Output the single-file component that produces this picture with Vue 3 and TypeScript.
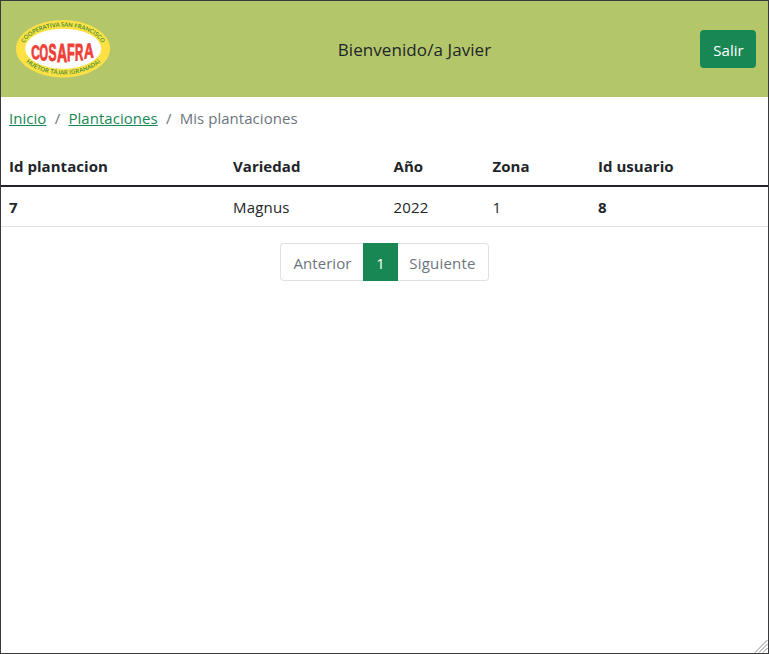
<script setup lang="ts">
interface Plantacion {
  id: number
  variedad: string
  anio: number
  zona: number
  usuario: number
}

interface Letra {
  texto: string
  x: number
  y: number
  ancho: number
  alto: number
  sesgo: number
}

const columnas: string[] = ['Id plantacion', 'Variedad', 'Año', 'Zona', 'Id usuario']
const plantaciones: Plantacion[] = [
  { id: 7, variedad: 'Magnus', anio: 2022, zona: 1, usuario: 8 },
]

// Letras del logotipo: posición de la base, escala horizontal y vertical, e inclinación
const letras: Letra[] = [
  { texto: 'C', x: 15.2, y: 39.2, ancho: 1.2, alto: 1.95, sesgo: 4 },
  { texto: 'O', x: 23.6, y: 40.7, ancho: 1.1, alto: 2.3, sesgo: 2 },
  { texto: 'S', x: 32.6, y: 41.6, ancho: 1.2, alto: 2.4, sesgo: 0 },
  { texto: 'A', x: 41.1, y: 42.4, ancho: 1.4, alto: 2.55, sesgo: 0 },
  { texto: 'F', x: 51, y: 41.6, ancho: 1.25, alto: 2.45, sesgo: 0 },
  { texto: 'R', x: 59, y: 40.9, ancho: 1.15, alto: 2.35, sesgo: -3 },
  { texto: 'A', x: 67.9, y: 39.3, ancho: 1.35, alto: 2.1, sesgo: -8 },
]
</script>

<template>
  <div class="marco">
    <header class="cabecera">
      <svg class="logo" width="94" height="58" viewBox="0 0.5 94 58">
        <defs>
          <path id="arco-superior" d="M7 29.5 A40 22.4 0 0 1 87 29.5" />
          <path id="arco-inferior" d="M3.8 29 A43.4 26 0 0 0 90.6 29" />
        </defs>
        <ellipse cx="47" cy="29.2" rx="47" ry="28.7" fill="#ffe145" />
        <ellipse cx="47.2" cy="29.2" rx="38" ry="20" fill="#fff" />
        <text class="lema">
          <textPath href="#arco-superior" startOffset="50%" text-anchor="middle" textLength="88">COOPERATIVA SAN FRANCISCO</textPath>
        </text>
        <text class="lema">
          <textPath href="#arco-inferior" startOffset="50%" text-anchor="middle" textLength="80">HUÉTOR TÁJAR (GRANADA)</textPath>
        </text>
        <text
          v-for="(l, i) in letras"
          :key="i"
          class="letra"
          :transform="`translate(${l.x} ${l.y}) skewY(${l.sesgo}) scale(${l.ancho} ${l.alto})`"
        >{{ l.texto }}</text>
      </svg>
      <span class="saludo">Bienvenido/a Javier</span>
      <button class="salir" type="button">Salir</button>
    </header>

    <nav class="migas">
      <a href="#">Inicio</a>
      <span class="barra">/</span>
      <a href="#">Plantaciones</a>
      <span class="barra">/</span>
      <span>Mis plantaciones</span>
    </nav>

    <table class="tabla">
      <colgroup>
        <col class="c1" /><col class="c2" /><col class="c3" /><col class="c4" /><col />
      </colgroup>
      <thead>
        <tr>
          <th v-for="c in columnas" :key="c">{{ c }}</th>
        </tr>
      </thead>
      <tbody>
        <tr v-for="p in plantaciones" :key="p.id">
          <th>{{ p.id }}</th>
          <td>{{ p.variedad }}</td>
          <td>{{ p.anio }}</td>
          <td>{{ p.zona }}</td>
          <th>{{ p.usuario }}</th>
        </tr>
      </tbody>
    </table>

    <nav class="paginas">
      <span class="pagina anterior">Anterior</span>
      <span class="pagina activa">1</span>
      <span class="pagina siguiente">Siguiente</span>
    </nav>

    <svg class="tirador" width="14" height="14" viewBox="0 0 14 14">
      <path d="M1 13.5 L13.5 1 M5 13.5 L13.5 5 M9 13.5 L13.5 9" />
    </svg>
  </div>
</template>

<style>
body {
  margin: 0;
  background: #fff;
}
</style>

<style scoped>
.marco {
  position: relative;
  box-sizing: border-box;
  width: 769px;
  height: 654px;
  border: 1px solid #3a393b;
  overflow: hidden;
  color: #212529;
  font-family: 'Open Sans', 'Noto Sans', sans-serif;
  font-size: 15px;
  line-height: 24px;
  letter-spacing: 0.04px;
}
.cabecera {
  display: grid;
  grid-template-columns: 94px 1fr 56px;
  align-items: center;
  box-sizing: border-box;
  height: 96px;
  padding: 0 12px 0 15px;
  background: #b3c76a;
}
.logo {
  display: block;
}
.lema {
  font: bold 5.9px 'Lato', sans-serif;
  letter-spacing: 0;
  fill: #4c9437;
}
.letra {
  font: bold 10px 'Liberation Sans', sans-serif;
  letter-spacing: 0;
  fill: #ee4036;
  stroke: #ee4036;
  stroke-width: 0.4px;
}
.saludo {
  justify-self: center;
  padding: 2px 0 0 19px;
  font-size: 17px;
  letter-spacing: 0.08px;
}
.salir {
  height: 38px;
  padding: 1px 0 0 1px;
  border: 0;
  border-radius: 4px;
  background: #198754;
  color: #fff;
  font: inherit;
  letter-spacing: 0.04px;
}
.migas {
  display: flex;
  height: 24px;
  padding: 9px 8px 16px;
  color: #6c757d;
}
.migas a {
  color: #198754;
  text-decoration: underline;
}
.barra {
  width: 22px;
  text-align: center;
}
.tabla {
  width: 100%;
  border-collapse: separate;
  border-spacing: 0;
  table-layout: fixed;
}
.c1 { width: 224px; }
.c2 { width: 160.5px; }
.c3 { width: 99px; }
.c4 { width: 105.5px; }
.tabla th,
.tabla td {
  height: 24px;
  padding: 8px 8px 7px;
  text-align: left;
  border-bottom: 1px solid #dee2e6;
}
.tabla td {
  letter-spacing: 0.2px;
}
.tabla thead th {
  border-bottom: 2px solid #212529;
}
.paginas {
  display: flex;
  justify-content: center;
  margin-top: 16px;
}
.pagina {
  box-sizing: border-box;
  height: 38px;
  padding-top: 7px;
  border: 1px solid #dee2e6;
  color: #6c757d;
  text-align: center;
}
.anterior {
  width: 83px;
  padding-left: 1px;
  border-right: 0;
  border-radius: 4px 0 0 4px;
}
.activa {
  width: 35px;
  border-color: #198754;
  background: #198754;
  color: #fff;
}
.siguiente {
  width: 91px;
  padding-right: 1px;
  border-left: 0;
  border-radius: 0 4px 4px 0;
  letter-spacing: 0.22px;
}
.tirador {
  position: absolute;
  right: 0;
  bottom: 0;
}
.tirador path {
  fill: none;
  stroke: #8a8a8a;
  stroke-width: 1;
}
</style>
